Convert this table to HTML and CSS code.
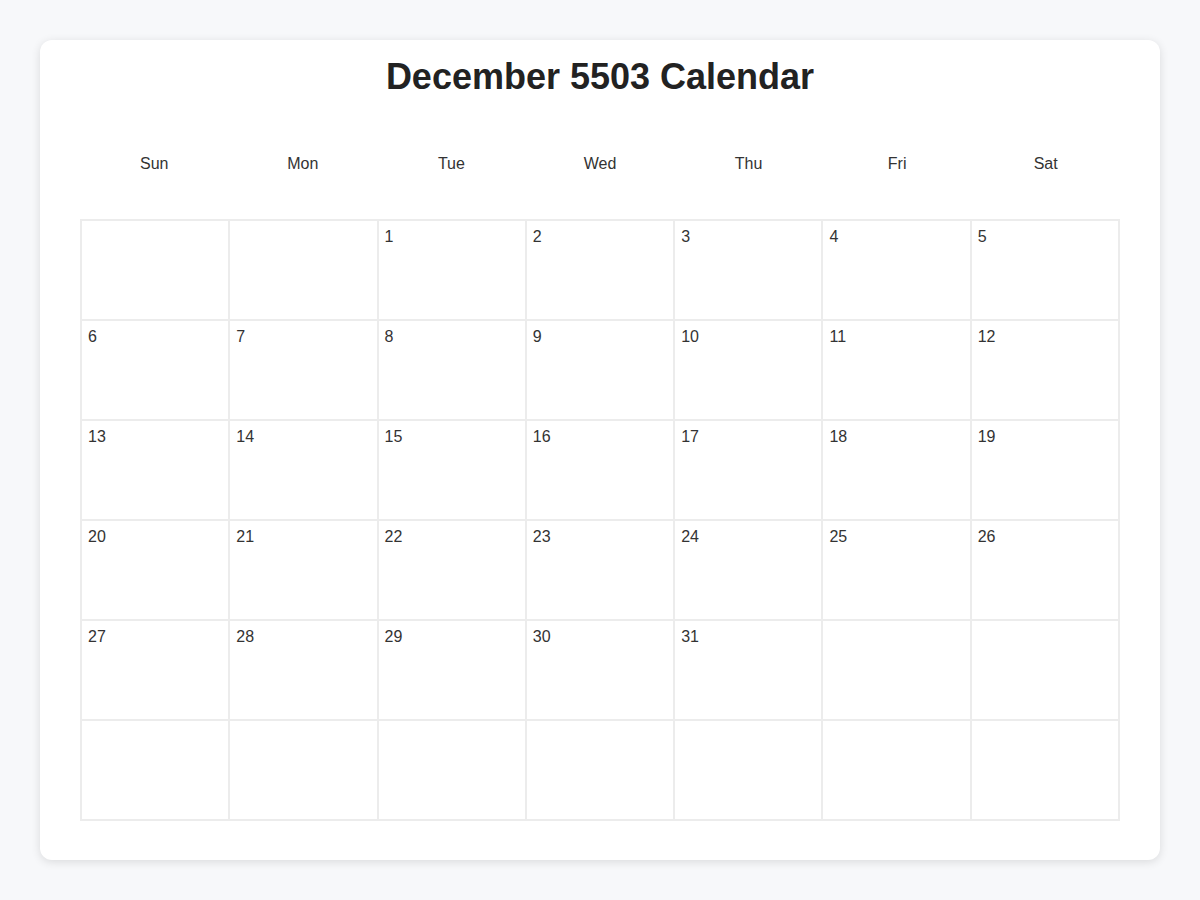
FILE: index.html
```html
<!DOCTYPE html>
<html lang="en">
<head>
<meta charset="utf-8">
<title>December 5503 Calendar</title>
<link rel="stylesheet" href="styles.css">
</head>
<body>
<div class="card">
  <h1 class="title">December 5503 Calendar</h1>
  <div class="weekdays">
    <div class="wd">Sun</div><div class="wd">Mon</div><div class="wd">Tue</div><div class="wd">Wed</div><div class="wd">Thu</div><div class="wd">Fri</div><div class="wd">Sat</div>
  </div>
  <div class="grid">
    <div class="cell"></div><div class="cell"></div><div class="cell">1</div><div class="cell">2</div><div class="cell">3</div><div class="cell">4</div><div class="cell">5</div>
    <div class="cell">6</div><div class="cell">7</div><div class="cell">8</div><div class="cell">9</div><div class="cell">10</div><div class="cell">11</div><div class="cell">12</div>
    <div class="cell">13</div><div class="cell">14</div><div class="cell">15</div><div class="cell">16</div><div class="cell">17</div><div class="cell">18</div><div class="cell">19</div>
    <div class="cell">20</div><div class="cell">21</div><div class="cell">22</div><div class="cell">23</div><div class="cell">24</div><div class="cell">25</div><div class="cell">26</div>
    <div class="cell">27</div><div class="cell">28</div><div class="cell">29</div><div class="cell">30</div><div class="cell">31</div><div class="cell"></div><div class="cell"></div>
    <div class="cell"></div><div class="cell"></div><div class="cell"></div><div class="cell"></div><div class="cell"></div><div class="cell"></div><div class="cell"></div>
  </div>
</div>
</body>
</html>
```

FILE: styles.css
```css
html, body {
  margin: 0;
  padding: 0;
}
body {
  background: #f7f8fa;
  font-family: "Liberation Sans", Arial, Helvetica, sans-serif;
  color: #333;
  padding: 40px;
  height: 900px;
  box-sizing: border-box;
}
.card {
  background: #fff;
  border-radius: 12px;
  box-shadow: 0 2px 10px rgba(0, 0, 0, 0.12);
  padding: 16px 40px 39px;
  height: 820px;
  box-sizing: border-box;
}
.title {
  margin: 0 0 37px;
  font-size: 36px;
  font-weight: bold;
  text-align: center;
  color: #222;
}
.weekdays {
  display: grid;
  grid-template-columns: repeat(7, 1fr);
  margin-bottom: 26px;
}
.wd {
  text-align: center;
  font-size: 16px;
  padding: 20px 0;
  color: #333;
}
.grid {
  display: grid;
  grid-template-columns: repeat(7, 1fr);
  grid-auto-rows: 100px;
  border: 1px solid #ececec;
}
.cell {
  border: 1px solid #ececec;
  padding: 7px 6px 5px;
  font-size: 16px;
  color: #333;
}
```
